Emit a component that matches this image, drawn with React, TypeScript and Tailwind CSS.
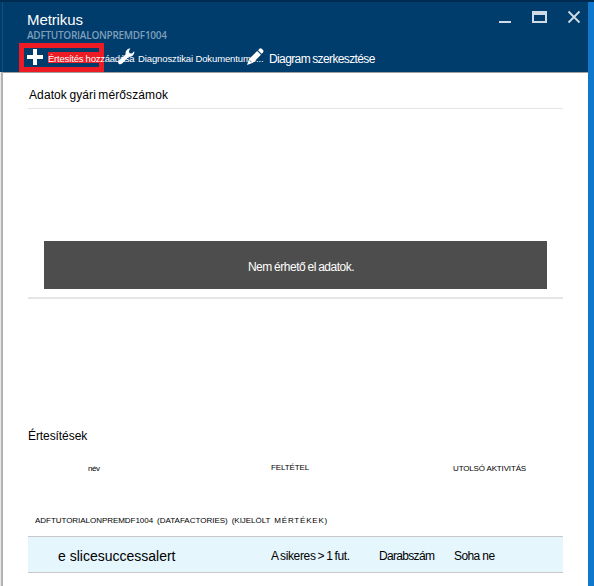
import React from "react";

const SANS = "font-['Liberation_Sans',Arial,sans-serif]";

function WindowControls() {
  return (
    <svg width="84" height="16" viewBox="0 0 84 16" className="shrink-0">
      <rect x="1" y="12" width="12" height="2" fill="#cfdbe6" />
      <path d="M34 2H49V14H34ZM36 6V12H47V6Z" fill="#cfdbe6" fillRule="evenodd" />
      <path d="M70.5 2.5L81.5 13.5M81.5 2.5L70.5 13.5" stroke="#cfdbe6" strokeWidth="1.9" />
    </svg>
  );
}

function Toolbar() {
  return (
    <div className="relative flex h-[29px] items-center text-white">
      <div className="absolute left-[16px] top-0 h-[29px] w-[85px] border-[5px] border-[#ed1c24]" />
      <svg width="16" height="16" viewBox="0 0 16 16" className="relative -top-px ml-[24px] shrink-0">
        <path d="M6 0h4v6h6v4h-6v6H6v-6H0V6h6z" fill="#fff" />
      </svg>
      <div className="relative ml-[5px] w-[70px] shrink-0 whitespace-nowrap text-[9.5px] leading-[11px] tracking-[-0.25px]">
        <div className="absolute left-0 top-0 h-[11px] w-[52px] bg-[#ed1c24]" />
        <span className="relative top-px">Értesítés hozzáadása</span>
      </div>
      <svg width="17" height="17" viewBox="0 0 17 17" className="relative -top-px shrink-0">
        <path
          d="M8 3Q9.5.4 12.3.2L10.8 3.4l.9 1.9 2.1.2 2.5-2.3Q16.6 6 14.6 7.8 12.8 9.2 10.6 8.8L4.4 15.3Q2.2 17.2.7 15.7-.7 14 1.3 12.2L7.7 6.3Q7.3 4.4 8 3Z"
          fill="#fff"
        />
      </svg>
      <span className="relative top-[1.5px] ml-[3px] w-[109px] shrink-0 whitespace-nowrap text-[9.5px] tracking-[-0.12px]">
        Diagnosztikai Dokumentumo...
      </span>
      <svg width="17" height="17" viewBox="0 0 17 17" className="relative -top-px shrink-0">
        <path d="M0 17L2 11 10.2 3 14 6.8 6 14.7Z" fill="#fff" />
        <path d="M11 2.2L12.7.6Q13.8-.2 15 .9l1 1Q17 3 16.1 4.2L14.6 5.8Z" fill="#fff" />
        <path d="M2.6 12.2l2.1 2.1" stroke="#003c6c" strokeWidth="0.6" />
      </svg>
      <span className="relative top-px ml-[5px] whitespace-nowrap text-[12px] tracking-[-0.62px] [word-spacing:-0.5px]">
        Diagram szerkesztése
      </span>
    </div>
  );
}

export default function App() {
  return (
    <div className={`flex h-[586px] w-[594px] flex-col overflow-hidden bg-white text-black ${SANS}`}>
      <div className="h-[2px] shrink-0 bg-[#002b50]" />
      <div className="flex min-h-0 flex-1">
        <div className="flex w-[3px] shrink-0 flex-col">
          <div className="h-[70px] border-r border-[#174e7a] bg-[#003c6c]" />
          <div className="flex-1 border-l border-[#e8e8e8] bg-[#b3b3b3]" />
        </div>

        <main className="flex min-w-0 flex-1 flex-col">
          <header className="h-[71px] shrink-0 border-b border-[#a0a0a0] bg-[#003c6c]">
            <div className="flex h-[41px] justify-between pl-[24px] pr-[6px]">
              <div className="pt-[9px]">
                <h1 className="text-[15px] leading-[18px] tracking-[-0.1px] text-white">Metrikus</h1>
                <p className="font-['Open_Sans',sans-serif] text-[10px] leading-[13px] font-semibold tracking-[-0.27px] text-[#7f9fba]">
                  ADFTUTORIALONPREMDF1004
                </p>
              </div>
              <div className="pt-[7px]">
                <WindowControls />
              </div>
            </div>
            <Toolbar />
          </header>

          <div className="flex flex-1 flex-col pl-[25px] pr-[25px]">
            <section className="h-[226px] border-b-2 border-[#e5e5e5]">
              <h2 className="h-[36px] border-b border-[#e5e5e5] pt-[14px] pl-px text-[12px] leading-[16px] tracking-[0.1px] [word-spacing:-1px]">
                Adatok gyári mérőszámok
              </h2>
              <div className="mx-[16px] mt-[132px] flex h-[48px] items-center justify-center bg-[#4d4d4d] pt-[4px] pl-[11px] text-[12px] tracking-[-0.5px] text-white [word-spacing:-0.5px]">
                Nem érhető el adatok.
              </div>
            </section>

            <section className="pt-[129px]">
              <h2 className="text-[12px] leading-[16px] tracking-[-0.08px]">Értesítések</h2>
              <div className="flex h-[48px] pt-[17px] text-[8px] leading-[14px]">
                <span className="w-[183px] pl-[60px] pt-px tracking-[-0.4px]">név</span>
                <span className="w-[182px] pl-[60px] tracking-[-0.1px]">FELTÉTEL</span>
                <span className="whitespace-nowrap pl-[60px] pt-px tracking-[-0.15px]">UTOLSÓ AKTIVITÁS</span>
              </div>
              <div className="flex h-[44px] gap-[4px] whitespace-nowrap pt-[22px] pl-[7px] text-[8px] leading-[14px]">
                <span className="tracking-[-0.04px]">ADFTUTORIALONPREMDF1004</span>
                <span>(DATAFACTORIES)</span>
                <span className="tracking-[-0.05px]">(KIJELÖLT</span>
                <span className="tracking-[0.8px]">MÉRTÉKEK)</span>
              </div>
              <div className="flex h-[37px] items-center whitespace-nowrap border-y border-[#c8c8c8] bg-[#e5f6fd] pt-[3px] text-[12px]">
                <span className="w-[243px] pl-[30px] text-[14px]">e slicesuccessalert</span>
                <span className="w-[108px] tracking-[-0.35px] [word-spacing:-1px]">A sikeres &gt; 1 fut.</span>
                <span className="w-[75px] tracking-[-0.68px]">Darabszám</span>
                <span className="tracking-[-0.6px]">Soha ne</span>
              </div>
            </section>
          </div>
        </main>

        <div className="w-[6px] shrink-0 bg-[#0f78cc]" />
      </div>
    </div>
  );
}
